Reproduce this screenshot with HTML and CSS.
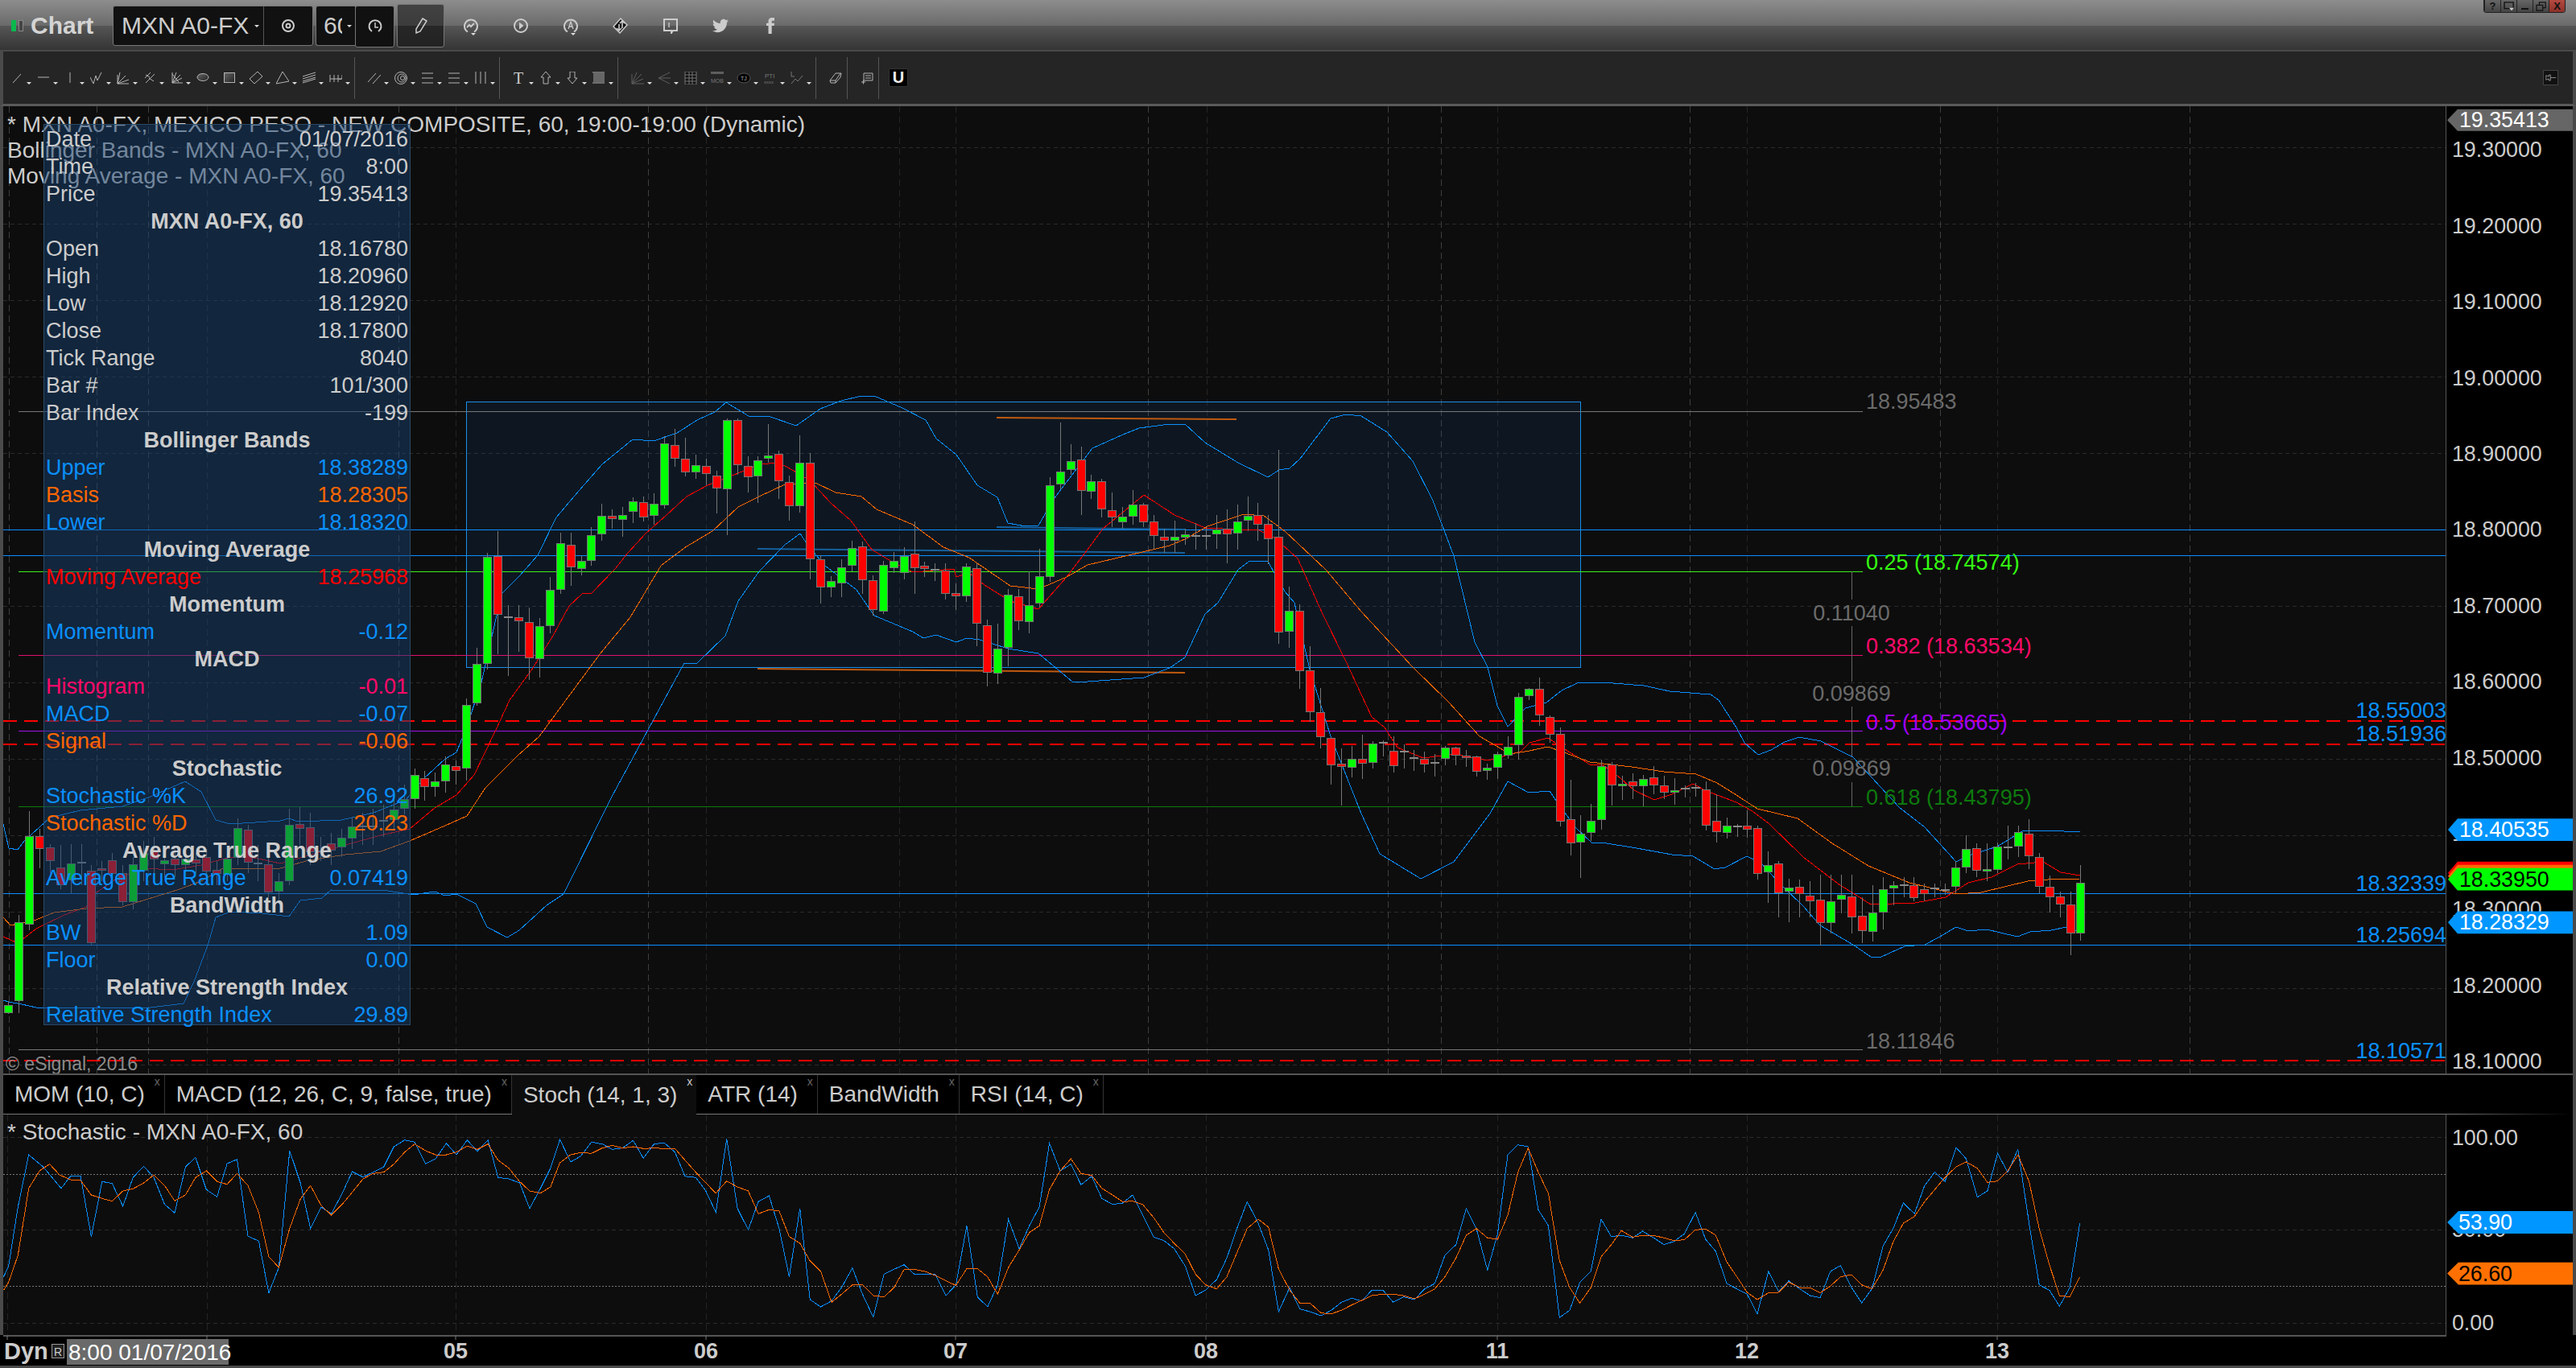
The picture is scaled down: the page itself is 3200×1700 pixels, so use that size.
FILE: index.html
```html
<!DOCTYPE html>
<html lang="en">
<head>
<meta charset="utf-8">
<title>Chart</title>
<link rel="stylesheet" href="styles.css">
</head>
<body>
<svg class="sprite" width="0" height="0">
  <defs>
    <linearGradient id="fillGrad" x1="0" y1="0" x2="1" y2="1"><stop offset="0" stop-color="#666"/><stop offset="1" stop-color="#222"/></linearGradient>
    <symbol id="i-line" viewBox="0 0 16 16"><path d="M3 14L13 3"/></symbol>
    <symbol id="i-hline" viewBox="0 0 16 16"><path d="M1 7h14"/></symbol>
    <symbol id="i-vline" viewBox="0 0 16 16"><path d="M8 1v13"/></symbol>
    <symbol id="i-zig" viewBox="0 0 16 16"><path d="M0 7l4 8 3-10 2 6 5-10"/></symbol>
    <symbol id="i-fan" viewBox="0 0 16 16"><path d="M1 15L4 1M1 15L11 5M1 15L15 10M1 15h14M1 15V4"/></symbol>
    <symbol id="i-fib" viewBox="0 0 16 16"><path d="M2 8l7-7M3 14L14 3M3 4l5 3M7 8l6 4"/></symbol>
    <symbol id="i-gann" viewBox="0 0 16 16"><path d="M3 1v13h13M3 14L13 4M3 14L8 1M3 14l12-6M3 3l8 10"/></symbol>
    <symbol id="i-ellipse" viewBox="0 0 16 16"><ellipse cx="8" cy="7" rx="7" ry="4.5" fill="url(#fillGrad)"/></symbol>
    <symbol id="i-rect" viewBox="0 0 16 16"><rect x="1.5" y="1.5" width="13" height="12" fill="url(#fillGrad)"/></symbol>
    <symbol id="i-diamond" viewBox="0 0 16 16"><path d="M0 9L10 0l6 6-10 9z"/></symbol>
    <symbol id="i-tri" viewBox="0 0 16 16"><path d="M0 15L8 0l8 12z"/></symbol>
    <symbol id="i-hatch" viewBox="0 0 16 16"><path d="M0 6l16-5M0 9l16-5M0 12l16-5M0 14l16-5"/></symbol>
    <symbol id="i-fork" viewBox="0 0 16 16"><path d="M1 4v9M1 9h15M6 4v9M11 4v9M16 4v3c0 2-2 3-4 2"/></symbol>
    <symbol id="i-slash" viewBox="0 0 16 16"><path d="M0 13L10 2M6 15L16 4"/></symbol>
    <symbol id="i-rings" viewBox="0 0 16 16"><circle cx="8" cy="8" r="7.5"/><circle cx="9" cy="8" r="5"/><circle cx="10" cy="8" r="2.5"/></symbol>
    <symbol id="i-lines" viewBox="0 0 16 16"><path d="M1 2h14M1 8h14M1 14h14"/></symbol>
    <symbol id="i-bars" viewBox="0 0 16 16"><path d="M2 0v15M8 0v15M14 0v15"/></symbol>
    <symbol id="i-up" viewBox="0 0 16 16"><path d="M8 0l6 7h-3v8H5V7H2z"/></symbol>
    <symbol id="i-down" viewBox="0 0 16 16"><path d="M5 0h6v8h3l-6 7-6-7h3z"/></symbol>
    <symbol id="i-flag" viewBox="0 0 16 16"><rect x="1" y="2" width="14" height="11" fill="#666" stroke="none"/><path d="M0 1h15M0 14h15"/></symbol>
    <symbol id="i-dfan" viewBox="0 0 16 16"><path d="M1 15V3M1 15h15M1 15L13 3M1 15L7 1M1 15L15 9"/></symbol>
    <symbol id="i-darrow" viewBox="0 0 16 16"><path d="M15 1L1 8l14 7M1 8h15"/></symbol>
    <symbol id="i-grid" viewBox="0 0 16 16"><path d="M1 0h14v16H1zM1 4h14M1 8h14M1 12h14M6 0v16M10 0v16"/></symbol>
    <symbol id="i-eraser" viewBox="0 0 16 16"><path d="M1 11L8 2h7l-1 5-6 7H2zM1 11h7l6-9M8 11v3"/></symbol>
    <symbol id="i-note" viewBox="0 0 16 16"><path d="M4 2h11v9H4zM6 5h7M6 8h7M1 13h5M3.5 10.5v5"/></symbol>
    <symbol id="i-pencil" viewBox="0 0 16 20"><path d="M10 1l5 3-8 13-5 2 0-5z"/></symbol>
    <symbol id="i-gear" viewBox="0 0 20 20"><circle cx="10" cy="10" r="7" fill="none" stroke-width="2"/><circle cx="10" cy="10" r="2.5" fill="none" stroke-width="2"/></symbol>
    <symbol id="i-clock" viewBox="0 0 20 20"><path d="M6 16A7.5 7.5 0 1 1 14 16" stroke-width="2"/><path d="M10 5v6h4" stroke-width="1.5"/></symbol>
    <symbol id="i-trend" viewBox="0 0 20 20"><path d="M6 17.5A8 8 0 1 1 14 17.5" stroke-width="2"/><path d="M5 12l3-3 2 2 4-4" stroke-width="2"/></symbol>
    <symbol id="i-play" viewBox="0 0 20 20"><circle cx="10" cy="10" r="8" stroke-width="2"/><path d="M8 5.5L13.5 10 8 14.5z" fill="#ccc" stroke="none"/></symbol>
    <symbol id="i-alert" viewBox="0 0 20 20"><path d="M6 17.5A8 8 0 1 1 14 17.5" stroke-width="2"/><path d="M7 14l3-9 3 9M8 11h4" stroke-width="1.3"/></symbol>
    <symbol id="i-link" viewBox="0 0 20 20"><path d="M10 1l8 8-9 10-8-8z" fill="#111" stroke="#ccc"/><path d="M12 4v9M9 7l3-3 3 3M8 16V8M5 13l3 3 3-3" stroke-width="1.6"/></symbol>
    <symbol id="i-chat" viewBox="0 0 20 20"><path d="M2 2h16v14h-5l-2 3v-3H2z" stroke-width="2"/><path d="M8 6v6" stroke-width="1.4"/></symbol>
    <symbol id="i-twitter" viewBox="0 0 24 24"><path class="solid" d="M23.954 4.569c-.885.389-1.83.654-2.825.775 1.014-.611 1.794-1.574 2.163-2.723-.951.555-2.005.959-3.127 1.184-.896-.959-2.173-1.559-3.591-1.559-2.717 0-4.92 2.203-4.92 4.917 0 .39.045.765.127 1.124C7.691 8.094 4.066 6.13 1.64 3.161c-.427.722-.666 1.561-.666 2.475 0 1.71.87 3.213 2.188 4.096-.807-.026-1.566-.248-2.228-.616v.061c0 2.385 1.693 4.374 3.946 4.827-.413.111-.849.171-1.296.171-.314 0-.615-.03-.916-.086.631 1.953 2.445 3.377 4.604 3.417-1.68 1.319-3.809 2.105-6.102 2.105-.39 0-.779-.023-1.17-.067 2.189 1.394 4.768 2.209 7.557 2.209 9.054 0 13.999-7.496 13.999-13.986 0-.209 0-.42-.015-.63.961-.689 1.8-1.56 2.46-2.548l-.047-.02z"/></symbol>
    <symbol id="i-fb" viewBox="0 0 24 24"><path class="solid" d="M14 8V6c0-1 .5-1.5 1.5-1.5H18V0h-4c-3 0-5 2-5 5v3H6v4h3v12h5V12h3.500l.5-4z"/></symbol>
    <symbol id="i-pin" viewBox="0 0 20 16"><path d="M1 4l5 2V3h3v10H6v-3l-5 2zM9 8h10"/></symbol>
    <symbol id="i-mon" viewBox="0 0 16 14"><path d="M1 1h13v9H1z" stroke-width="1.6"/><path d="M8 9h7l-3.500 4z" class="solid"/></symbol>
    <symbol id="i-res" viewBox="0 0 16 14"><path d="M1 5h9v8H1zM5 5V1h9v8h-4" stroke-width="1.400"/></symbol>
  </defs>
</svg>

<div class="window">
  <header class="titlebar">
    <div class="logo"><span class="logo-on"></span><span class="logo-off"></span></div>
    <div class="app-name">Chart</div>
    <div class="symbol-box">
      <span class="symbol-text">MXN A0-FX</span><span class="caret"></span>
      <span class="box-cell"><svg class="ico-top"><use href="#i-gear"/></svg></span>
    </div>
    <div class="interval-box"><span class="interval-text">60</span><span class="caret"></span></div>
    <div class="clock-box"><svg class="ico-top"><use href="#i-clock"/></svg></div>
    <div class="pencil-box"><svg class="ico-top"><use href="#i-pencil"/></svg></div>
    <div class="top-btn caret-under"><svg class="ico-top"><use href="#i-trend"/></svg></div>
    <div class="top-btn"><svg class="ico-top"><use href="#i-play"/></svg></div>
    <div class="top-btn caret-under"><svg class="ico-top"><use href="#i-alert"/></svg></div>
    <div class="top-btn"><svg class="ico-top"><use href="#i-link"/></svg></div>
    <div class="top-btn"><svg class="ico-top"><use href="#i-chat"/></svg></div>
    <div class="top-btn"><svg class="ico-top"><use href="#i-twitter"/></svg></div>
    <div class="top-btn"><svg class="ico-top"><use href="#i-fb"/></svg></div>
    <div class="win-buttons">
      <span class="win-btn">?</span>
      <span class="win-btn"><svg class="ico-win"><use href="#i-mon"/></svg></span>
      <span class="win-btn"><span class="min-bar"></span></span>
      <span class="win-btn"><svg class="ico-win"><use href="#i-res"/></svg></span>
      <span class="win-btn win-close">X</span>
    </div>
  </header>

  <nav class="toolbar">
    <span class="tool"><svg class="ico"><use href="#i-line"/></svg></span>
    <span class="tool"><svg class="ico"><use href="#i-hline"/></svg></span>
    <span class="tool"><svg class="ico"><use href="#i-vline"/></svg></span>
    <span class="tool"><svg class="ico"><use href="#i-zig"/></svg></span>
    <span class="tool"><svg class="ico"><use href="#i-fan"/></svg></span>
    <span class="tool"><svg class="ico"><use href="#i-fib"/></svg></span>
    <span class="tool"><svg class="ico"><use href="#i-gann"/></svg></span>
    <span class="tool"><svg class="ico"><use href="#i-ellipse"/></svg></span>
    <span class="tool"><svg class="ico"><use href="#i-rect"/></svg></span>
    <span class="tool"><svg class="ico"><use href="#i-diamond"/></svg></span>
    <span class="tool"><svg class="ico"><use href="#i-tri"/></svg></span>
    <span class="tool"><svg class="ico"><use href="#i-hatch"/></svg></span>
    <span class="tool"><svg class="ico"><use href="#i-fork"/></svg></span>
    <span class="sep"></span>
    <span class="tool"><svg class="ico"><use href="#i-slash"/></svg></span>
    <span class="tool"><svg class="ico"><use href="#i-rings"/></svg></span>
    <span class="tool"><svg class="ico"><use href="#i-lines"/></svg></span>
    <span class="tool"><svg class="ico"><use href="#i-lines"/></svg></span>
    <span class="tool"><svg class="ico"><use href="#i-bars"/></svg></span>
    <span class="sep"></span>
    <span class="tool"><svg class="ico" viewBox="0 0 16 16"><text class="tool-T" x="1" y="15">T</text></svg></span>
    <span class="tool"><svg class="ico"><use href="#i-up"/></svg></span>
    <span class="tool"><svg class="ico"><use href="#i-down"/></svg></span>
    <span class="tool"><svg class="ico"><use href="#i-flag"/></svg></span>
    <span class="sep"></span>
    <span class="tool tool-dim"><svg class="ico"><use href="#i-dfan"/></svg></span>
    <span class="tool tool-dim"><svg class="ico"><use href="#i-darrow"/></svg></span>
    <span class="tool tool-dark"><svg class="ico"><use href="#i-grid"/></svg></span>
    <span class="tool tool-dim"><svg class="ico" viewBox="0 0 16 16"><rect class="mob-bar" x="0" y="0" width="16" height="3"/><text class="tool-mini" x="0" y="14">MOB</text></svg></span>
    <span class="tool"><svg class="ico" viewBox="0 0 16 16"><ellipse class="tj-back" cx="8" cy="8" rx="8" ry="6"/><text class="tool-mini tj" x="4" y="11">TJ</text></svg></span>
    <span class="tool tool-dim"><svg class="ico" viewBox="0 0 16 16"><text class="tool-mini pti" x="1" y="8">PTI</text><text class="tool-mini pti2" x="0" y="15">xxxx</text></svg></span>
    <span class="tool tool-dim"><svg class="ico" viewBox="0 0 16 16"><path class="tool-strong" d="M1 0v6h4M1 15l5-6 3 3 6-7"/></svg></span>
    <span class="sep"></span>
    <span class="tool tool-plain"><svg class="ico"><use href="#i-eraser"/></svg></span>
    <span class="sep"></span>
    <span class="tool tool-plain"><svg class="ico"><use href="#i-note"/></svg></span>
    <span class="sep sep-last"></span>
    <span class="magnet">U</span>
    <span class="pin"><svg class="ico-pin"><use href="#i-pin"/></svg></span>
  </nav>

  <section class="price-row">
    <svg class="plot" id="plot" viewBox="4 132 3034 1202" width="3034" height="1202">
      <g id="p-grid"></g>
      <rect class="range-box" x="579.500" y="499.500" width="1384" height="330"/>
      <g id="p-levels"></g>
      <g id="p-curves"></g>
      <g id="p-candles"></g>
      <text class="t t-lg" x="9" y="154">* MXN A0-FX, MEXICO PESO - NEW COMPOSITE, 60, 19:00-19:00 (Dynamic)</text>
      <text class="t t-lg" x="9" y="186">Bollinger Bands - MXN A0-FX, 60</text>
      <text class="t t-lg" x="9" y="218">Moving Average - MXN A0-FX, 60</text>
      <text class="t t-grey" x="2318" y="499">18.95483</text>
      <text class="t t-lime" x="2318" y="699">0.25 (18.74574)</text>
      <text class="t t-pink" x="2318" y="803">0.382 (18.63534)</text>
      <text class="t t-purple" x="2318" y="898">0.5 (18.53665)</text>
      <text class="t t-dgreen" x="2318" y="991">0.618 (18.43795)</text>
      <text class="t t-grey" x="2318" y="1294">18.11846</text>
      <text class="t t-grey t-mid" x="2300" y="762">0.11040</text>
      <text class="t t-grey t-mid" x="2300" y="862">0.09869</text>
      <text class="t t-grey t-mid" x="2300" y="955">0.09869</text>
      <text class="t t-blue t-end" x="3039" y="883">18.55003</text>
      <text class="t t-blue t-end" x="3039" y="912">18.51936</text>
      <text class="t t-blue t-end" x="3039" y="1098">18.32339</text>
      <text class="t t-blue t-end" x="3039" y="1162">18.25694</text>
      <text class="t t-blue t-end" x="3039" y="1306">18.10571</text>
      <text class="t t-dim" x="7" y="1322">© eSignal, 2016</text>
    </svg>
    <svg class="axis" viewBox="3038 132 158 1202" width="158" height="1202">
      <text class="t" x="3045" y="183">19.30000</text>
      <text class="t" x="3045" y="278">19.20000</text>
      <text class="t" x="3045" y="373">19.10000</text>
      <text class="t" x="3045" y="468">19.00000</text>
      <text class="t" x="3045" y="563">18.90000</text>
      <text class="t" x="3045" y="658">18.80000</text>
      <text class="t" x="3045" y="753">18.70000</text>
      <text class="t" x="3045" y="848">18.60000</text>
      <text class="t" x="3045" y="943">18.50000</text>
      <text class="t" x="3045" y="1038">18.40000</text>
      <text class="t" x="3045" y="1133">18.30000</text>
      <text class="t" x="3045" y="1228">18.20000</text>
      <text class="t" x="3045" y="1323">18.10000</text>
      <path class="tag-grey" d="M3052 132H3196V159H3052L3039 145.500Z"/>
      <text class="t t-white" x="3054" y="145">19.35413</text>
      <path class="tag-blue" d="M3052 1019H3196V1047H3052L3040 1033Z"/>
      <text class="t t-white" x="3054" y="1033">18.40535</text>
      <path class="tag-red" d="M3052 1073H3196V1101H3052L3040 1087Z"/>
      <path class="tag-orange" d="M3052 1077H3196V1105H3052L3040 1091Z"/>
      <path class="tag-green" d="M3052 1081H3196V1109H3052L3040 1095Z"/>
      <text class="t t-black" x="3054" y="1095">18.33950</text>
      <path class="tag-blue" d="M3052 1135H3196V1163H3052L3040 1149Z"/>
      <text class="t t-white" x="3054" y="1149">18.28329</text>
    </svg>

    <aside class="tip">
      <div class="row"><span>Date</span><span>01/07/2016</span></div>
      <div class="row"><span>Time</span><span>8:00</span></div>
      <div class="row"><span>Price</span><span>19.35413</span></div>
      <div class="row head">MXN A0-FX, 60</div>
      <div class="row"><span>Open</span><span>18.16780</span></div>
      <div class="row"><span>High</span><span>18.20960</span></div>
      <div class="row"><span>Low</span><span>18.12920</span></div>
      <div class="row"><span>Close</span><span>18.17800</span></div>
      <div class="row"><span>Tick Range</span><span>8040</span></div>
      <div class="row"><span>Bar #</span><span>101/300</span></div>
      <div class="row"><span>Bar Index</span><span>-199</span></div>
      <div class="row head">Bollinger Bands</div>
      <div class="row c-blue"><span>Upper</span><span>18.38289</span></div>
      <div class="row c-orange"><span>Basis</span><span>18.28305</span></div>
      <div class="row c-blue"><span>Lower</span><span>18.18320</span></div>
      <div class="row head">Moving Average</div>
      <div class="row c-red"><span>Moving Average</span><span>18.25968</span></div>
      <div class="row head">Momentum</div>
      <div class="row c-blue"><span>Momentum</span><span>-0.12</span></div>
      <div class="row head">MACD</div>
      <div class="row c-pink"><span>Histogram</span><span>-0.01</span></div>
      <div class="row c-blue"><span>MACD</span><span>-0.07</span></div>
      <div class="row c-orange"><span>Signal</span><span>-0.06</span></div>
      <div class="row head">Stochastic</div>
      <div class="row c-blue"><span>Stochastic %K</span><span>26.92</span></div>
      <div class="row c-orange"><span>Stochastic %D</span><span>20.23</span></div>
      <div class="row head">Average True Range</div>
      <div class="row c-blue"><span>Average True Range</span><span>0.07419</span></div>
      <div class="row head">BandWidth</div>
      <div class="row c-blue"><span>BW</span><span>1.09</span></div>
      <div class="row c-blue"><span>Floor</span><span>0.00</span></div>
      <div class="row head">Relative Strength Index</div>
      <div class="row c-blue"><span>Relative Strength Index</span><span>29.89</span></div>
    </aside>
  </section>

  <div class="tabs">
    <div class="tab">MOM (10, C)<span class="tab-x">x</span></div>
    <div class="tab">MACD (12, 26, C, 9, false, true)<span class="tab-x">x</span></div>
    <div class="tab tab-active">Stoch (14, 1, 3)<span class="tab-x">x</span></div>
    <div class="tab">ATR (14)<span class="tab-x">x</span></div>
    <div class="tab">BandWidth<span class="tab-x">x</span></div>
    <div class="tab">RSI (14, C)<span class="tab-x">x</span></div>
  </div>

  <section class="stoch-row">
    <svg class="plot" viewBox="4 1385 3034 274" width="3034" height="274">
      <g id="s-grid"></g>
      <g id="s-curves"></g>
      <text class="t t-lg" x="9" y="1406">* Stochastic - MXN A0-FX, 60</text>
    </svg>
    <svg class="axis" viewBox="3038 1385 158 274" width="158" height="274">
      <text class="t" x="3045" y="1413">100.00</text>
      <text class="t" x="3045" y="1528">50.00</text>
      <text class="t" x="3045" y="1645">0.00</text>
      <path class="tag-blue" d="M3053 1505H3196V1533H3053L3039 1519Z"/>
      <text class="t t-white" x="3053" y="1519">53.90</text>
      <path class="tag-deep" d="M3053 1569H3196V1597H3053L3039 1583Z"/>
      <text class="t t-black" x="3053" y="1583">26.60</text>
    </svg>
  </section>

  <footer class="timeline">
    <svg viewBox="4 1659 3192 38" width="3192" height="38">
      <path class="time-rule" d="M4 1660H3039"/>
      <path class="time-ticks" d="M9 1660v5M257 1660v5M566 1660v5M877 1660v5M1187 1660v5M1498 1660v5M1860 1660v5M2170 1660v5M2481 1660v5"/>
      <text class="t t-bold t-dyn" x="5" y="1679">Dyn</text>
      <rect class="dyn-icon" x="64.500" y="1670.500" width="15" height="17"/>
      <text class="t dyn-r" x="67" y="1680">R</text>
      <rect class="now-bg" x="83" y="1664" width="201" height="32"/>
      <text class="t t-white t-lg" x="85" y="1680">8:00 01/07/2016</text>
      <text class="t t-bold t-mid" x="566" y="1679">05</text>
      <text class="t t-bold t-mid" x="877" y="1679">06</text>
      <text class="t t-bold t-mid" x="1187" y="1679">07</text>
      <text class="t t-bold t-mid" x="1498" y="1679">08</text>
      <text class="t t-bold t-mid" x="1860" y="1679">11</text>
      <text class="t t-bold t-mid" x="2170" y="1679">12</text>
      <text class="t t-bold t-mid" x="2481" y="1679">13</text>
    </svg>
  </footer>
</div>
<script src="chart.js"></script>
</body>
</html>
```

FILE: styles.css
```css
* { box-sizing: border-box; }
html, body { margin: 0; padding: 0; }
body {
  width: 3200px;
  height: 1700px;
  overflow: hidden;
  background: #4a4a4a;
  font-family: "Liberation Sans", Arial, sans-serif;
  color: #ccc;
}
.sprite { position: absolute; }
.window { display: flex; flex-direction: column; width: 3200px; height: 1700px; }

/* Title bar */
.titlebar {
  display: flex;
  align-items: center;
  height: 64px;
  flex: none;
  padding-left: 14px;
  background: linear-gradient(#8d8d8d 0, #6a6a6a 32px, #565656 32px, #343434 62px, #4a4a4a 62px);
}
.logo { display: flex; gap: 3px; }
.logo-on { width: 6px; height: 14px; background: #0bb84e; }
.logo-off { width: 6px; height: 14px; background: #444; border: 1px solid #888; }
.app-name { margin-left: 9px; font-size: 30px; font-weight: bold; color: #d4d4d4; width: 102px; }
.symbol-box {
  display: flex;
  align-items: center;
  width: 249px;
  height: 50px;
  background: #111;
  border: 1px solid #777;
  border-radius: 3px;
  font-size: 30px;
}
.symbol-text { width: 175px; padding-left: 10px; white-space: nowrap; }
.caret { width: 0; height: 0; border-left: 3px solid transparent; border-right: 3px solid transparent; border-top: 3px solid #ddd; flex: none; }
.box-cell { display: flex; align-items: center; justify-content: center; height: 100%; margin-left: 5px; flex: 1; border-left: 1px solid #555; }
.interval-box {
  display: flex;
  align-items: center;
  width: 49px;
  height: 50px;
  margin-left: 3px;
  background: #111;
  border: 1px solid #777;
  border-right: 0;
  border-radius: 3px 0 0 3px;
  padding-left: 9px;
  font-size: 30px;
}
.interval-text { display: block; width: 23px; overflow: hidden; margin-right: 6px; }
.clock-box, .pencil-box { display: flex; align-items: center; justify-content: center; }
.clock-box { width: 49px; height: 52px; margin-top: 1px; background: #111; border: 1px solid #777; border-radius: 3px; }
.pencil-box {
  width: 59px;
  height: 54px;
  margin-left: 3px;
  margin-right: 2px;
  border: 1px solid #777;
  border-radius: 3px;
  background: linear-gradient(#414141 0, #3c3c3c 50%, #272727 50%, #222 100%);
}
.ico-top { width: 20px; height: 20px; fill: none; stroke: #ccc; stroke-width: 1.5; }
.solid { fill: #ccc; stroke: none; }
.top-btn { display: flex; align-items: center; justify-content: center; width: 62px; position: relative; }
.caret-under::after {
  content: "";
  position: absolute;
  left: 31px;
  top: 19px;
  border-left: 3px solid transparent;
  border-right: 3px solid transparent;
  border-top: 3px solid #ddd;
}
.win-buttons { display: flex; align-self: flex-start; margin-left: auto; margin-right: 13px; border: 1px solid #222; border-top: 0; border-radius: 0 0 4px 4px; overflow: hidden; }
.win-btn {
  display: flex; align-items: center; justify-content: center;
  width: 20px; height: 15px;
  background: linear-gradient(#666, #444);
  border-left: 1px solid #222;
  color: #111;
  font-size: 13px;
  font-weight: bold;
}
.win-close { background: linear-gradient(#b54a40, #8c3029); }
.ico-win { width: 14px; height: 12px; fill: none; stroke: #111; stroke-width: 1.2; }
.ico-win .solid { fill: #111; }
.min-bar { width: 9px; height: 2px; margin-top: 6px; background: #111; }

/* Drawing toolbar */
.toolbar {
  display: flex;
  align-items: center;
  height: 68px;
  flex: none;
  padding: 0 0 0 12px;
  background: #252525;
  border-bottom: 3px solid #5a5a5a;
  border-left: 4px solid #4a4a4a;
  border-right: 4px solid #4a4a4a;
}
.tool { display: flex; align-items: center; width: 33px; height: 40px; flex: none; }
.toolbar .tool:first-child { margin-left: -3px; }
.tool::after {
  content: "";
  margin: 14px 0 0 4px;
  border-left: 3px solid transparent;
  border-right: 3px solid transparent;
  border-top: 3px solid #ddd;
}
.tool-plain { width: 24px; }
.tool-plain::after { display: none; }
.ico { width: 16px; height: 16px; flex: none; fill: none; stroke: #b4b4b4; stroke-width: 1; overflow: visible; }
.tool-dim .ico { stroke: #5e5e5e; }
.tool-dark .ico { stroke: #777; fill: #111; }
.tool-T { font-family: "Liberation Serif", serif; font-size: 20px; fill: #ccc; stroke: none; }
.tool-mini { font-size: 7px; fill: #777; stroke: none; }
.mob-bar { fill: #5e5e5e; stroke: none; }
.tj-back { fill: #000; stroke: #555; }
.tj { fill: #aaa; }
.pti { font-size: 8px; }
.pti2 { font-size: 6px; }
.tool-strong { stroke: #777; }
.sep { width: 1px; height: 52px; margin: 0 16px 0 -2px; background: #555; flex: none; }
.sep-last { margin-right: 12px; }
.magnet {
  display: flex; align-items: center; justify-content: center;
  width: 24px; height: 23px;
  background: #000;
  border: 1px solid #333;
  border-radius: 2px;
  color: #eee;
  font-size: 20px;
  font-weight: bold;
}
.pin {
  display: flex; align-items: center; justify-content: center;
  width: 19px; height: 19px;
  margin-left: auto;
  margin-right: 18px;
  background: #111;
  border: 1px solid #444;
}
.ico-pin { width: 14px; height: 11px; fill: none; stroke: #bbb; stroke-width: 1; }

/* Price pane */
.price-row {
  position: relative;
  display: flex;
  flex: none;
  height: 1204px;
  margin: 0 4px;
  background: #000;
  border-bottom: 2px solid #555;
}
.plot { display: block; flex: none; background: #0d0d0d; }
.axis { display: block; flex: none; background: #000; border-left: 1px solid #555; }

.t { font-size: 27px; fill: #ccc; dominant-baseline: central; }
.t-lg { font-size: 28px; }
.t-dyn { font-size: 29px; }
.t-grey { fill: #6a6a6a; }
.t-lime { fill: #33ff11; }
.t-pink { fill: #ff0a68; }
.t-purple { fill: #a000ff; }
.t-dgreen { fill: #0d7a0d; }
.t-blue { fill: #0a8fff; }
.t-white { fill: #fff; }
.t-black { fill: #000; }
.t-dim { fill: #8a8a8a; font-size: 23px; }
.t-bold { font-weight: bold; }
.t-mid { text-anchor: middle; }
.t-end { text-anchor: end; }

.range-box { fill: rgba(20, 90, 170, 0.13); stroke: #1a8fe8; stroke-width: 1; }
.grid-h { stroke: #2b2b2b; stroke-width: 1; stroke-dasharray: 5 4; fill: none; }
.grid-v { stroke: #242424; stroke-width: 1; stroke-dasharray: 8 5; fill: none; }
.grid-v2 { stroke: #3e3e3e; stroke-width: 1; stroke-dasharray: 8 5; fill: none; }
.grid-dot { stroke: #777; stroke-width: 1; stroke-dasharray: 2 2; fill: none; }
.lv { stroke-width: 1; fill: none; shape-rendering: crispEdges; }
.lv-blue { stroke: #0a8fff; }
.lv-grey { stroke: #777; }
.lv-lime { stroke: #3cf01c; }
.lv-pink { stroke: #e0106e; }
.lv-purple { stroke: #a010e8; }
.lv-dgreen { stroke: #0d7a0d; }
.lv-red { stroke: #f00; stroke-width: 2; stroke-dasharray: 17 9; }
.lv-fibgrey { stroke: #666; }
.tl-orange { stroke: #c05a10; stroke-width: 2; fill: none; }
.tl-blue { stroke: #15609c; stroke-width: 2; fill: none; }
.cv { fill: none; stroke-width: 1; shape-rendering: crispEdges; }
.cv-blue { stroke: #0a8fff; }
.cv-red { stroke: #f00; }
.cv-orange { stroke: #ff6a00; }
.wick { stroke: #777; stroke-width: 1; fill: none; shape-rendering: crispEdges; }
.body-g { fill: #0f0; stroke: #777; stroke-width: 1; shape-rendering: crispEdges; }
.body-r { fill: #f00; stroke: #777; stroke-width: 1; shape-rendering: crispEdges; }
.body-d { fill: #888; stroke: none; shape-rendering: crispEdges; }

.tag-grey { fill: #666; }
.tag-blue { fill: #0096ff; }
.tag-red { fill: #f00; }
.tag-orange { fill: #ff6a00; }
.tag-green { fill: #0f0; }
.tag-deep { fill: #ff7000; }

/* Data-window tooltip */
.tip {
  position: absolute;
  left: 50px;
  top: 22px;
  width: 456px;
  height: 1120px;
  padding: 1px 2px 0;
  background: rgba(23, 63, 109, 0.5);
  border: 1px solid #294a66;
  font-size: 27px;
  line-height: 34px;
  color: #ccc;
}
.row { display: flex; height: 34px; justify-content: space-between; white-space: nowrap; }
.head { justify-content: center; font-weight: bold; }
.c-blue { color: #0a8fff; }
.c-orange { color: #ff6600; }
.c-red { color: #f00; }
.c-pink { color: #ff0a68; }

/* Study tabs */
.tabs {
  display: flex;
  flex: none;
  width: 3192px;
  height: 49px;
  margin: 0 4px;
  background: #000;
  border-bottom: 1px solid #777;
  border-right: 158px solid #000;
  font-size: 28px;
}
.tab {
  position: relative;
  display: flex;
  align-items: center;
  height: 48px;
  padding: 0 24px 0 14px;
  border-right: 1px solid #333;
  white-space: nowrap;
}
.tab-active { height: 49px; background: #0d0d0d; border-right: 0; }
.tab-x { position: absolute; right: 5px; top: 0; font-size: 14px; line-height: 16px; color: #666; }
.tab-active .tab-x { color: #ccc; }

/* Stochastic pane */
.stoch-row { display: flex; flex: none; height: 274px; margin: 0 4px; background: #000; }

/* Time axis */
.timeline { flex: none; height: 41px; padding: 0 4px; background: #000; border-bottom: 3px solid #4a4a4a; }
.timeline svg { display: block; }
.time-rule { stroke: #555; stroke-width: 2; fill: none; }
.time-ticks { stroke: #777; stroke-width: 1; fill: none; }
.dyn-icon { fill: #222; stroke: #999; }
.dyn-r { font-size: 14px; }
.now-bg { fill: #6a6a6a; }
```

FILE: chart.js
```js
const NS = 'http://www.w3.org/2000/svg';
function add(parent, tag, attrs) {
  const n = document.createElementNS(NS, tag);
  for (const k in attrs) n.setAttribute(k, attrs[k]);
  parent.appendChild(n);
  return n;
}
const $ = id => document.getElementById(id);

/* ---------- price pane: grid ---------- */
const pGrid = $('p-grid');
for (let i = 0; i <= 12; i++) {
  const y = 183 + 95 * i + 0.5;
  add(pGrid, 'line', { x1: 4, x2: 3038, y1: y, y2: y, class: 'grid-h' });
}
[257, 566, 877, 1117, 1187, 1499, 1860, 2170, 2481].forEach(x =>
  add(pGrid, 'line', { x1: x + .5, x2: x + .5, y1: 132, y2: 1334, class: 'grid-v' }));
[11, 120, 184, 495, 805, 1426, 1724, 1790, 2099, 2410, 2720].forEach(x =>
  add(pGrid, 'line', { x1: x + .5, x2: x + .5, y1: 132, y2: 1334, class: 'grid-v2' }));

/* ---------- price pane: levels ---------- */
const lev = $('p-levels');
[[511, 23, 2314, 'grey'], [658, 4, 3038, 'blue'], [690, 4, 3038, 'blue'], [710, 23, 2314, 'lime'],
 [814, 23, 2314, 'pink'], [908, 23, 2314, 'purple'],
 [1002, 23, 2314, 'dgreen'], [1110, 4, 3038, 'blue'], [1174, 4, 3038, 'blue'], [1304, 23, 2314, 'grey']].forEach(l =>
  add(lev, 'line', { x1: l[1], x2: l[2], y1: l[0] + .5, y2: l[0] + .5, class: 'lv lv-' + l[3] }));
[896, 925, 1318].forEach(y =>
  add(lev, 'line', { x1: 4, x2: 3038, y1: y, y2: y, class: 'lv lv-red' }));
[[710, 745], [778, 847], [878, 940], [972, 1002]].forEach(s =>
  add(lev, 'line', { x1: 2300.5, x2: 2300.5, y1: s[0], y2: s[1], class: 'lv lv-fibgrey' }));
[[1238, 519, 1536, 521, 'orange'], [941, 682, 1472, 687, 'blue'], [1238, 655, 1472, 658, 'blue'], [941, 831, 1472, 836, 'orange']].forEach(t =>
  add(lev, 'line', { x1: t[0], y1: t[1], x2: t[2], y2: t[3], class: 'tl-' + t[4] }));

/* ---------- price pane: curves ---------- */
const upper = '4,1024 11,1054 22,1056 31,1044 49,1028 62,1016 100,1007 152,1002 187,990 230,971 250,984 268,1019 286,1024 348,1020 359,1017 370,1021 424,1019 464,1010 504,994 527,967 553,943 567,935 580,903 598,848 616,769 624,737 646,715 668,690 691,643 719,610 748,577 786,546 812,548 841,538 866,522 888,512 902,500 930,517 954,517 989,529 1019,508 1045,498 1070,492 1086,492 1121,507 1150,522 1163,545 1188,565 1214,603 1239,618 1252,650 1274,654 1290,653 1309,620 1357,557 1395,540 1415,532 1453,527 1472,527 1497,550 1538,575 1575,593 1589,584 1602,582 1615,570 1653,520 1672,515 1691,517 1723,537 1755,573 1780,622 1806,691 1832,798 1848,829 1860,877 1873,903 1895,880 1921,873 1940,858 1959,849 1991,848 2042,852 2074,859 2125,863 2135,870 2157,904 2167,923 2184,938 2200,932 2217,922 2235,916 2262,921 2302,941 2359,1003 2391,1028 2430,1071 2449,1062 2481,1052 2512,1033 2544,1032 2584,1034';
const lower = '4,1243 11,1245 27,1248 45,1252 112,1252 187,1252 228,1247 241,1220 259,1172 268,1140 286,1133 326,1135 359,1139 373,1119 400,1116 411,1106 482,1107 513,1112 540,1108 553,1113 567,1111 591,1123 605,1152 630,1165 645,1156 679,1125 700,1111 760,990 825,870 850,824 866,824 901,790 917,747 943,710 975,677 994,663 1003,677 1025,703 1064,733 1086,765 1134,785 1147,793 1163,789 1188,798 1201,793 1217,795 1252,806 1290,812 1332,847 1351,847 1421,842 1453,830 1472,817 1497,763 1513,749 1538,708 1551,698 1575,697 1586,718 1596,735 1608,749 1627,832 1653,915 1691,1011 1714,1061 1765,1092 1806,1071 1851,1011 1873,971 1899,985 1925,983 1933,995 1957,1028 1977,1047 1990,1047 2033,1054 2077,1062 2103,1064 2130,1080 2143,1078 2170,1064 2187,1072 2210,1097 2240,1126 2261,1150 2302,1174 2324,1189 2337,1189 2366,1176 2391,1174 2410,1164 2430,1152 2445,1157 2468,1155 2506,1164 2522,1158 2548,1156 2567,1152 2584,1159';
const red = '4,1164 22,1172 45,1154 80,1137 107,1127 120,1109 143,1093 179,1079 214,1081 250,1075 286,1065 321,1067 348,1073 384,1063 429,1050 473,1038 509,1030 540,1004 567,988 589,963 616,907 633,870 662,830 687,790 707,753 723,738 735,737 764,707 780,687 802,663 828,640 853,617 879,603 917,588 943,577 968,575 984,584 1006,597 1032,625 1057,647 1083,683 1108,698 1134,711 1185,707 1188,717 1204,712 1223,727 1255,747 1290,757 1325,717 1351,683 1370,657 1421,615 1459,640 1497,656 1564,659 1583,668 1612,694 1643,763 1672,822 1704,891 1720,904 1736,929 1768,942 1806,937 1848,945 1889,934 1900,923 1923,917 1947,933 1975,950 1990,950 2007,962 2030,982 2055,994 2077,987 2103,974 2120,983 2157,997 2177,1008 2197,1023 2240,1065 2283,1098 2324,1124 2379,1122 2417,1115 2445,1097 2474,1090 2506,1074 2538,1071 2560,1084 2584,1088';
const orange = '4,1140 13,1150 45,1143 67,1134 107,1129 152,1127 223,1105 250,1095 277,1079 312,1079 348,1079 384,1069 429,1062 473,1058 509,1045 553,1026 580,1014 603,979 643,939 670,915 703,870 745,813 783,767 821,703 853,679 885,660 917,630 943,617 975,602 1013,600 1038,612 1070,617 1089,633 1134,652 1172,680 1204,693 1236,715 1255,728 1290,732 1325,717 1351,702 1453,678 1472,670 1500,654 1545,639 1570,641 1596,660 1647,708 1691,760 1755,829 1800,873 1838,915 1876,937 1900,933 1923,928 1943,935 1975,947 2027,953 2067,959 2107,962 2133,973 2157,988 2183,1005 2233,1017 2276,1048 2321,1076 2372,1097 2430,1111 2461,1109 2519,1095 2544,1093 2584,1092';
const pc = $('p-curves');
add(pc, 'polyline', { points: upper, class: 'cv cv-blue' });
add(pc, 'polyline', { points: lower, class: 'cv cv-blue' });
add(pc, 'polyline', { points: red, class: 'cv cv-red' });
add(pc, 'polyline', { points: orange, class: 'cv cv-orange' });

/* ---------- price pane: candles: x bodyTop bodyBottom kind wickTop wickBottom ---------- */
const candles = `
10 1249 1258 g 1244 1260
24 1146 1243 g 1137 1259
37 1039 1148 g 1008 1156
49 1039 1054 r 1030 1079
62 1053 1069 r 1049 1085
75 1078 1099 r 1050 1105
87 1073 1093 g 1049 1110
100 1072 1072 d 1049 1100
113 1082 1171 r 1075 1175
126 1079 1081 r 1070 1095
139 1069 1085 r 1060 1100
152 1085 1120 r 1075 1125
166 1074 1120 g 1065 1130
179 1060 1081 g 1045 1095
191 1056 1067 r 1040 1085
204 1069 1073 g 1060 1090
217 1067 1074 r 1055 1090
230 1067 1074 g 1055 1085
243 1068 1072 r 1060 1085
256 1065 1082 r 1055 1100
269 1081 1085 r 1070 1100
282 1067 1086 g 1060 1095
295 1029 1065 g 1017 1075
307 1031 1071 r 1025 1085
320 1073 1073 d 1050 1095
333 1074 1108 r 1060 1115
346 1095 1107 g 1085 1120
359 1025 1094 g 1005 1100
372 1024 1029 r 1003 1050
385 1028 1058 r 1010 1075
398 1058 1060 d 1040 1070
411 1048 1056 r 1035 1075
424 1041 1052 g 1030 1065
437 1027 1041 g 1015 1055
450 1027 1027 d 1010 1050
463 1027 1027 d 1005 1050
476 1020 1020 d 1000 1040
489 1006 1018 g 990 1030
502 993 1004 g 975 1012
515 963 992 g 955 1005
528 967 977 r 958 995
541 971 977 g 960 990
554 950 970 g 940 985
567 952 957 r 945 975
580 876 954 g 868 970
592 825 873 g 805 877
605 692 824 g 687 832
618 691 763 r 660 813
631 767 767 d 752 840
644 767 771 r 752 810
657 773 817 r 755 845
670 778 818 g 768 842
682 733 777 g 717 787
695 675 732 g 662 738
708 677 704 r 662 728
721 697 706 g 690 715
734 665 696 g 655 703
747 641 663 g 626 672
760 641 644 r 633 657
773 640 645 g 630 667
786 623 635 g 618 650
799 624 642 r 617 648
812 626 640 g 613 652
825 551 627 g 542 632
838 553 569 r 533 580
851 570 586 r 544 592
864 578 586 g 565 595
877 579 588 r 570 603
889 591 606 r 585 638
902 522 607 g 520 665
915 522 577 r 520 590
928 579 592 r 567 612
941 572 591 g 567 625
954 566 569 g 527 575
967 564 597 r 560 620
980 599 628 r 591 647
994 575 628 g 541 637
1006 575 694 r 563 720
1019 695 729 r 690 750
1032 722 729 g 716 742
1045 705 724 g 695 742
1059 681 702 g 672 710
1071 679 720 r 673 738
1084 721 757 r 715 765
1096 702 759 g 697 763
1110 697 705 g 686 712
1122 691 711 g 680 720
1135 688 705 r 648 738
1148 703 706 r 698 717
1161 708 708 d 700 722
1174 709 737 r 700 745
1187 737 740 r 725 758
1200 704 740 g 700 748
1213 706 774 r 700 803
1226 777 835 r 770 853
1239 806 836 g 775 850
1252 739 804 g 732 828
1265 741 771 r 732 783
1278 752 772 g 710 787
1291 716 749 g 682 755
1303 603 716 g 593 723
1316 586 601 g 525 608
1329 573 583 g 552 590
1342 571 609 r 555 640
1355 598 610 g 590 620
1369 598 632 r 595 643
1381 634 642 r 612 655
1394 642 648 g 630 657
1407 627 641 g 609 652
1420 627 648 r 625 655
1433 648 665 r 640 683
1446 667 671 r 657 687
1459 667 671 g 647 687
1472 664 667 g 657 677
1485 666 666 d 650 683
1498 666 666 d 655 683
1511 658 663 g 640 682
1524 657 663 r 633 700
1536 648 662 g 627 683
1549 641 646 g 617 660
1562 640 651 r 625 672
1575 651 669 r 640 701
1588 667 785 r 559 800
1601 759 784 g 729 805
1614 759 833 r 751 856
1627 833 884 r 803 897
1640 885 915 r 855 930
1653 917 950 r 916 975
1666 949 952 r 930 1001
1679 943 953 g 927 966
1692 943 948 r 913 968
1704 924 947 g 921 955
1717 923 923 d 920 940
1730 933 951 r 915 960
1743 934 934 d 925 955
1756 942 942 d 932 958
1770 943 949 r 934 960
1782 948 948 d 937 965
1795 929 942 g 927 951
1809 929 938 r 928 951
1821 939 941 r 932 953
1834 940 958 r 939 965
1847 954 957 g 949 969
1860 937 953 g 934 968
1874 928 938 g 915 943
1886 866 925 g 861 944
1899 856 864 g 855 870
1911 856 888 r 842 902
1924 891 912 r 889 923
1937 912 1020 r 904 1027
1950 1018 1047 r 969 1063
1963 1036 1046 g 1013 1091
1976 1020 1034 g 999 1045
1989 952 1018 g 944 1031
2002 950 975 r 947 1001
2015 974 976 g 964 994
2028 971 976 r 961 993
2041 968 976 g 963 1002
2054 966 975 r 952 987
2067 976 984 r 964 993
2080 982 984 g 967 1000
2093 980 980 d 976 991
2106 979 979 d 973 990
2118 981 1025 r 971 1032
2131 1020 1033 r 987 1047
2144 1026 1034 g 1016 1042
2157 1027 1027 d 1024 1040
2170 1026 1030 r 1007 1041
2183 1029 1085 r 1026 1093
2196 1075 1083 g 1058 1122
2209 1073 1109 r 1070 1140
2222 1103 1107 g 1092 1146
2235 1102 1110 r 1093 1140
2248 1113 1119 r 1095 1140
2261 1118 1146 r 1087 1175
2274 1120 1146 g 1087 1160
2287 1112 1117 g 1087 1135
2301 1114 1139 r 1087 1160
2313 1138 1156 r 1115 1172
2326 1134 1157 g 1100 1170
2338 1105 1133 g 1090 1155
2351 1100 1103 g 1095 1125
2364 1100 1100 d 1090 1115
2377 1100 1115 r 1090 1120
2390 1105 1110 r 1098 1120
2403 1104 1104 d 1098 1115
2416 1106 1106 d 1098 1112
2430 1078 1101 g 1070 1110
2442 1055 1077 g 1038 1085
2455 1054 1081 r 1048 1090
2468 1080 1082 g 1048 1095
2481 1052 1080 g 1047 1085
2494 1053 1053 d 1026 1068
2507 1034 1051 g 1026 1065
2520 1036 1063 r 1018 1080
2532 1065 1101 r 1060 1110
2545 1102 1114 r 1088 1134
2558 1114 1123 r 1108 1140
2571 1124 1159 r 1108 1187
2584 1097 1159 g 1075 1169`;
const cg = $('p-candles');
candles.trim().split('\n').forEach(line => {
  const p = line.trim().split(' ');
  const i = Math.round((+p[0] - 10) / 12.937);
  const x = Math.round(10 + 12.937 * i);
  const t = +p[1], b = +p[2], k = p[3], wt = +p[4], wb = +p[5];
  add(cg, 'line', { x1: x + .5, x2: x + .5, y1: wt, y2: wb, class: 'wick' });
  if (k === 'd') add(cg, 'rect', { x: x - 5, y: t - 1, width: 11, height: 2, class: 'body-d' });
  else add(cg, 'rect', { x: x - 4.5, y: t + .5, width: 10, height: Math.max(b - t, 2), class: 'body-' + k });
});

/* ---------- stochastic pane ---------- */
const sGrid = $('s-grid');
[[1413, 'grid-h'], [1459, 'grid-dot'], [1528, 'grid-h'], [1598, 'grid-dot'], [1644, 'grid-h']].forEach(g =>
  add(sGrid, 'line', { x1: 4, x2: 3038, y1: g[0] + .5, y2: g[0] + .5, class: g[1] }));
[9, 257, 566, 877, 1187, 1498, 1860, 2170, 2481].forEach(x =>
  add(sGrid, 'line', { x1: x + .5, x2: x + .5, y1: 1385, y2: 1659, class: 'grid-v' }));

const leftK = '5,860 12,820 25,600 40,405 60,450 85,530 98,485 112,483 127,710 142,505 156,512 171,597 185,490 200,448 214,490 229,590 243,622 258,450 272,415 287,535 302,562 316,438 330,422 345,708 360,727 374,920 388,825 403,390 418,510 432,680 447,600 461,625 476,550 490,468 505,488 519,470 534,450 548,375 563,350 577,358 592,438 606,420 621,362 635,405 650,350 664,392 679,350 693,490 708,495 723,510 737,605 752,530 766,455 779,348 794,432 808,410 823,358 838,365 852,385 866,380 881,352 895,418 910,365 924,360 939,395 953,485 968,490 982,540 996,620 1011,345 1026,605 1041,685 1055,580 1070,558 1084,680 1098,860 1113,605 1127,945 1142,972 1157,950 1171,900 1186,827 1200,925 1215,1010 1230,850 1244,832 1258,815 1272,850 1287,850 1301,850 1316,930 1330,890 1345,670 1360,935 1374,972 1388,890 1403,645 1418,755 1432,670 1446,600 1460,362 1475,465 1490,440 1504,517 1519,485 1533,568 1548,590 1562,585';
const leftD = '5,910 12,880 25,780 40,530 55,465 69,440 83,480 98,498 112,500 127,555 142,568 156,578 171,540 185,532 200,510 214,480 229,520 243,577 258,555 272,490 287,465 302,505 316,515 330,475 345,520 360,620 374,785 388,825 403,680 418,570 432,520 447,595 461,630 476,590 490,545 505,495 519,475 534,470 548,440 563,395 577,365 592,390 606,405 621,405 635,395 650,372 664,385 679,365 693,425 708,455 723,505 737,540 752,548 766,525 779,435 794,405 808,397 823,400 838,380 852,370 866,380 881,375 895,382 910,380 924,382 939,382 953,425 968,470 982,510 996,548 1011,503 1026,525 1041,540 1055,625 1070,610 1084,615 1098,710 1113,735 1127,800 1142,840 1157,955 1171,925 1186,890 1200,890 1215,930 1230,935 1244,900 1258,832 1272,832 1287,840 1301,855 1316,875 1330,892 1345,830 1360,830 1374,860 1388,925 1403,825 1418,760 1432,695 1446,670 1460,535 1475,465 1490,420 1504,475 1519,482 1533,530 1548,555 1562,580';
const rightK = '6,555 17,630 29,712 40,725 51,755 63,820 74,930 85,910 97,870 108,790 119,680 130,580 142,660 153,760 164,990 176,900 187,980 198,990 210,1005 221,985 232,955 243,940 254,950 265,910 277,910 288,955 299,935 311,945 322,905 333,885 344,780 356,740 367,605 378,680 390,835 401,700 412,405 423,368 434,375 445,610 456,670 468,1012 479,985 490,880 502,840 513,645 524,710 535,705 547,715 558,690 570,715 581,740 592,728 603,700 615,620 626,720 637,765 649,885 660,905 671,925 682,998 694,840 705,915 716,875 728,905 739,930 750,938 761,840 772,818 784,900 795,957 806,905 818,745 829,680 840,585 852,625 863,520 874,470 885,505 897,378 908,420 920,563 931,540 942,400 953,470 964,385 976,660 987,890 998,910 1009,970 1020,900 1031,660';
const rightD = '6,578 17,590 29,640 40,695 51,735 63,775 74,850 85,890 97,905 108,860 119,770 130,680 142,645 153,675 164,830 176,910 187,958 198,958 210,995 221,998 232,985 243,965 254,948 265,930 277,925 288,925 299,930 311,942 322,925 333,905 344,860 356,790 367,705 378,680 390,715 401,720 412,630 423,470 434,380 445,470 456,550 468,800 479,900 490,958 502,900 513,785 524,740 535,688 547,712 558,706 570,706 581,715 592,725 603,722 615,685 626,682 637,705 649,805 660,860 671,918 682,945 694,920 705,918 716,880 728,900 739,900 750,920 761,895 772,860 784,852 795,890 806,905 818,835 829,730 840,660 852,635 863,580 874,535 885,490 897,450 908,432 920,455 931,508 942,503 953,465 964,405 976,505 987,680 998,815 1009,930 1020,935 1031,860';
function mapL(s) { return s.split(' ').map(p => { const a = p.split(','); return (a[0] / 1.12).toFixed(1) + ',' + (1300 + a[1] / 3).toFixed(1); }).join(' '); }
function mapR(s) { return s.split(' ').map(p => { const a = p.split(','); return (1400 + a[0] / 0.871).toFixed(1) + ',' + (1300 + a[1] / 3).toFixed(1); }).join(' '); }
const sc = $('s-curves');
add(sc, 'polyline', { points: mapL(leftK) + ' ' + mapR(rightK), class: 'cv cv-blue' });
add(sc, 'polyline', { points: mapL(leftD) + ' ' + mapR(rightD), class: 'cv cv-orange' });
```
